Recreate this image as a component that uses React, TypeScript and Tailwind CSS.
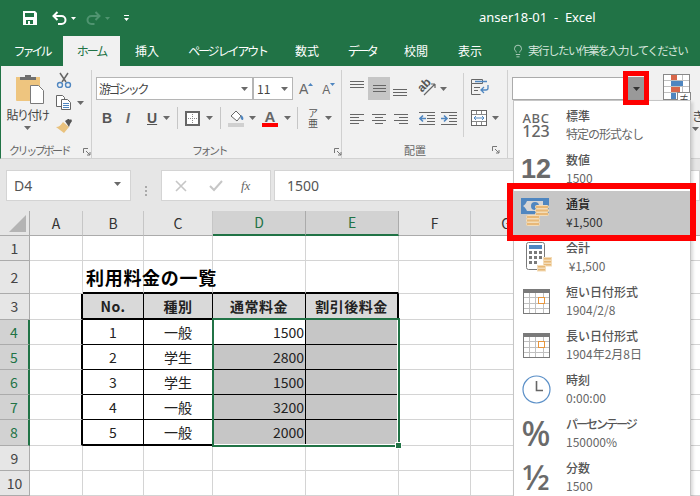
import React from "react";
import { Lightbulb } from "lucide-react";

const jp = "font-['Noto_Sans_CJK_JP','Noto_Sans',sans-serif]";

const Caret = ({ className = "" }: { className?: string }) => (
  <svg width="7" height="4" viewBox="0 0 7 4" className={`shrink-0 ${className}`}>
    <path d="M0 0h7L3.5 4z" fill="#6a6a6a" />
  </svg>
);

const Launcher = () => (
  <svg width="8" height="8" viewBox="0 0 8 8" className="shrink-0">
    <path d="M.5 5V.5H5M3 3l4 4M7 4v3H4" fill="none" stroke="#777" />
  </svg>
);

const Sep = ({ className = "" }: { className?: string }) => (
  <div className={`w-px h-[22px] bg-[#c6c6c6] shrink-0 ${className}`} />
);

// alignment icons share one drawing, only the line widths differ
const Lines = ({ rows, className = "" }: { rows: [number, number][]; className?: string }) => (
  <svg width="15" height="14" viewBox="0 0 15 14" className={`shrink-0 ${className}`}>
    {rows.map(([x, w], i) => (
      <rect key={i} x={x} y={1 + i * 3} width={w} height="1" fill="#666" />
    ))}
  </svg>
);

const Calendar = () => (
  <svg width="27" height="25" viewBox="0 0 27 25">
    <rect x="0.5" y="0.5" width="26" height="24" fill="#fff" stroke="#7a7a7a" />
    <rect x="0" y="0" width="27" height="4" fill="#7a7a7a" />
    <path d="M6.500 4v20M12.500 4v20M20.500 4v20M1 8.500h25M1 14.500h25M1 19.500h25" stroke="#c0c0c0" />
    <rect x="15.500" y="8.500" width="6" height="6" fill="#fff" stroke="#e8963c" />
  </svg>
);

const Currency = () => (
  <svg width="30" height="30" viewBox="0 0 30 30">
    <rect x="0" y="0" width="28" height="16" fill="#4f86c0" />
    <path d="M2 8c2-1 3-3 4-5h16v10H6C5 11 4 9 2 8z" fill="#d6d6d6" />
    <circle cx="14" cy="8" r="4" fill="#4f86c0" />
    <g fill="#e8b877" stroke="#f3dcb8" strokeWidth="1">
      <rect x="14.500" y="7.500" width="13" height="3" rx="1" />
      <rect x="14.500" y="11" width="13" height="3" rx="1" />
      <rect x="14.500" y="14.500" width="13" height="3" rx="1" />
      <rect x="5.500" y="17.500" width="13" height="3" rx="1" />
      <rect x="5.500" y="21" width="13" height="3" rx="1" />
      <rect x="5.500" y="24.500" width="13" height="3" rx="1" />
    </g>
  </svg>
);

const Calculator = () => (
  <svg width="27" height="31" viewBox="0 0 27 31" className="ml-[6px]">
    <rect x="0.5" y="0.5" width="18" height="27" rx="2" fill="#fff" stroke="#7a7a7a" />
    <rect x="3" y="3" width="13" height="4" fill="#4f86c0" />
    <path d="M3 9h3v3H3zM8 9h3v3H8zM13 9h3v3h-3zM3 14h3v3H3zM8 14h3v3H8zM13 14h3v3h-3zM3 19h3v3H3zM8 19h3v3H8z" fill="#7a7a7a" />
    <g fill="#e8b877" stroke="#f3dcb8">
      <rect x="17.500" y="15.500" width="8" height="2.500" />
      <rect x="17.500" y="18.500" width="8" height="2.500" />
      <rect x="17.500" y="21.500" width="8" height="2.500" />
      <rect x="11.500" y="23.500" width="8" height="2.500" />
      <rect x="11.500" y="26.500" width="8" height="2.500" />
    </g>
  </svg>
);

const Clock = () => (
  <svg width="29" height="29" viewBox="0 0 29 29">
    <circle cx="14.5" cy="14.5" r="13.5" fill="#fff" stroke="#5a8fc7" strokeWidth="1.2" />
    <path d="M14.5 6v9.500H21" fill="none" stroke="#666" strokeWidth="1.6" />
  </svg>
);

type Fmt = { label: string; sub: string; icon: React.ReactNode; selected?: boolean; labelCls?: string; subCls?: string };

const formats: Fmt[] = [
  {
    label: "標準",
    sub: "特定の形式なし",
    subCls: "tracking-[-1px]",
    icon: (
      <div className="flex flex-col items-center text-[#666] font-medium font-['Noto_Sans',sans-serif]">
        <span className="text-[13px] leading-[12px] tracking-[0.5px]">ABC</span>
        <span className="text-[16px] leading-[15px]">123</span>
      </div>
    ),
  },
  {
    label: "数値",
    sub: "1500",
    icon: <span className="text-[27px] leading-none font-bold text-[#6a6a6a] font-['Liberation_Sans',sans-serif]">12</span>,
  },
  { label: "通貨", sub: "¥1,500", icon: <Currency />, selected: true },
  { label: "会計", sub: " ¥1,500", icon: <Calculator /> },
  { label: "短い日付形式", sub: "1904/2/8", icon: <Calendar /> },
  { label: "長い日付形式", sub: "1904年2月8日", icon: <Calendar /> },
  { label: "時刻", sub: "0:00:00", icon: <Clock /> },
  {
    label: "パーセンテージ",
    labelCls: "tracking-[-2px]",
    sub: "150000%",
    icon: <span className="text-[34px] leading-none font-medium text-[#6a6a6a] font-['Noto_Sans',sans-serif]">%</span>,
  },
  {
    label: "分数",
    sub: "1500",
    icon: <span className="text-[34px] leading-none font-medium text-[#6a6a6a] font-['Noto_Sans',sans-serif]">½</span>,
  },
];

const tabs = [
  { name: "ファイル", w: "w-[63px]", cls: "tracking-[-3px]" },
  { name: "ホーム", w: "w-[57px]", active: true, cls: "tracking-[-2px]" },
  { name: "挿入", w: "w-[54px]", cls: "" },
  { name: "ページ レイアウト", w: "w-[107px]", cls: "tracking-[-2.2px]" },
  { name: "数式", w: "w-[52px]", cls: "" },
  { name: "データ", w: "w-[58px]", cls: "tracking-[-2.500px]" },
  { name: "校閲", w: "w-[50px]", cls: "" },
  { name: "表示", w: "w-[58px]", cls: "" },
];

const TitleBar = () => (
  <div className="h-[36px] bg-[#217346] flex items-center pl-[23px]">
    <svg width="14" height="14" viewBox="0 0 14 14">
      <path
        fillRule="evenodd"
        d="M0 0h12l2 2v12H0zM2 2v4h9V2zM3 9v4h7V9zM5 10h2v3H5z"
        fill="#fff"
      />
    </svg>
    <svg width="15" height="14" viewBox="0 0 15 14" className="ml-[15px]">
      <path d="M5.500 1L1.500 5l4 4M1.500 5h8a4 4 0 0 1 0 8H6" fill="none" stroke="#fff" strokeWidth="2" />
    </svg>
    <svg width="5" height="3" viewBox="0 0 5 3" className="ml-[4px]"><path d="M0 0h5L2.5 3z" fill="#fff" /></svg>
    <svg width="15" height="14" viewBox="0 0 15 14" className="ml-[10px]">
      <path d="M9.500 1l4 4-4 4M13.500 5h-8a4 4 0 0 0 0 8h3" fill="none" stroke="#4f9470" strokeWidth="2" />
    </svg>
    <svg width="5" height="3" viewBox="0 0 5 3" className="ml-[4px]"><path d="M0 0h5L2.5 3z" fill="#4f9470" /></svg>
    <svg width="5" height="6" viewBox="0 0 5 6" className="ml-[14px]">
      <path d="M0 0h5v1H0zM0 3h5L2.5 6z" fill="#fff" />
    </svg>
    <span className="ml-[350px] text-[13px] text-white whitespace-pre font-['Noto_Sans',sans-serif]">anser18-01  -  Excel</span>
  </div>
);

const TabBar = () => (
  <div className={`h-[30px] bg-[#217346] flex items-stretch text-[12px] text-white ${jp}`}>
    {tabs.map((t) => (
      <div
        key={t.name}
        className={`${t.w} ${t.cls} shrink-0 flex items-center justify-center whitespace-nowrap ${t.active ? "bg-[#f1f1f1] text-[#217346]" : ""}`}
      >
        {t.name}
      </div>
    ))}
    <div className="flex items-center ml-[12px] text-[#d5e5dc]">
      <Lightbulb size={14} strokeWidth={1.3} className="shrink-0" />
      <span className="ml-[3px] text-[11.5px] tracking-[-1.5px] whitespace-nowrap">実行したい作業を入力してください</span>
    </div>
  </div>
);

const Clipboard = () => (
  <div className="w-[91px] h-[88px] border-r border-[#d0d0d0] relative flex flex-col shrink-0">
    <div className="flex h-[72px]">
      <div className="w-[53px] flex flex-col items-center pt-[4px]">
        <svg width="28" height="30" viewBox="0 0 28 30" className="ml-[4px]">
          <path d="M0 3h24v24H1a1 1 0 0 1-1-1z" fill="#eec57f" />
          <path d="M4 6V3h5V1h6v2h5v3z" fill="#6f6f6f" />
          <path d="M14.500 11.500h8l5 5v13h-13z" fill="#fff" stroke="#7a7a7a" />
        </svg>
        <span className="text-[12px] leading-[14px] mt-[4px] tracking-[-1.5px] whitespace-nowrap text-[#444]">貼り付け</span>
        <Caret className="mt-[4px]" />
      </div>
      <div className="flex flex-col pl-[2px] pt-[2px]">
        <svg width="16" height="16" viewBox="0 0 16 16">
          <path d="M4 1l6 9M12 1l-6 9" stroke="#666" strokeWidth="1.5" />
          <circle cx="4" cy="13" r="2.500" fill="none" stroke="#4f86c0" strokeWidth="1.4" />
          <circle cx="12" cy="13" r="2.500" fill="none" stroke="#4f86c0" strokeWidth="1.4" />
        </svg>
        <div className="flex items-center mt-[7px]">
          <svg width="16" height="15" viewBox="0 0 16 15">
            <path d="M.5.5h6l2 2v9h-8z" fill="#fff" stroke="#666" />
            <path d="M5.500 4.500h6l3 3v7h-9z" fill="#fff" stroke="#666" />
            <path d="M7 8.500h6M7 10.500h6M7 12.500h6" stroke="#4f86c0" />
          </svg>
          <Caret className="ml-[5px]" />
        </div>
        <svg width="17" height="15" viewBox="0 0 17 15" className="mt-[8px]">
          <path d="M7 4l6 5-5 6L0 9c3 0 5-2 7-5z" fill="#e9c27e" />
          <path d="M9 3l3-2 1 0 1 1 1-1 1 2-2 3-1 3z" fill="#555" />
        </svg>
      </div>
    </div>
    <div className="mt-auto h-[16px] flex items-center pl-[8px] text-[11px] text-[#666] whitespace-nowrap">
      <span className="tracking-[-2.4px]">クリップボード</span>
      <span className="ml-[14px] mt-[3px] flex"><Launcher /></span>
    </div>
  </div>
);

const FontGroup = () => (
  <div className="w-[250px] h-[88px] border-r border-[#d0d0d0] flex flex-col pl-[4px] pt-[7px] shrink-0">
    <div className="flex h-[23px] items-center">
      <div className="w-[157px] h-[23px] bg-white border border-[#b5b5b5] flex items-center pl-[2px] pr-[4px] text-[12px] text-[#444]">
        <span className="tracking-[-2.400px]">游ゴシック</span>
        <Caret className="ml-auto" />
      </div>
      <div className="w-[40px] h-[23px] bg-white border border-[#b5b5b5] flex items-center pl-[3px] pr-[4px] text-[12px] text-[#444]">
        11
        <Caret className="ml-auto" />
      </div>
      <div className="ml-[6px] flex items-start text-[14px] leading-none font-['Liberation_Sans',sans-serif] text-[#666]">
        A<svg width="5" height="3" viewBox="0 0 5 3" className="mt-[1px]"><path d="M0 3h5L2.5 0z" fill="#4f86c0" /></svg>
      </div>
      <div className="ml-[9px] flex items-start text-[12px] leading-none font-['Liberation_Sans',sans-serif] text-[#666] mt-[2px]">
        A<svg width="5" height="3" viewBox="0 0 5 3" className="mt-[-1px]"><path d="M0 0h5L2.5 3z" fill="#4f86c0" /></svg>
      </div>
    </div>
    <div className="flex h-[22px] items-center mt-[7px] font-['Liberation_Sans',sans-serif] text-[#555]">
      <span className="ml-[6px] w-[10px] text-[14px] font-bold">B</span>
      <span className="ml-[14px] w-[8px] text-[14px] italic font-bold text-[#666]">I</span>
      <span className="ml-[13px] w-[10px] text-[14px] font-bold underline">U</span>
      <Caret className="ml-[6px]" />
      <Sep className="ml-[7px]" />
      <svg width="15" height="15" viewBox="0 0 15 15" className="ml-[7px]">
        <rect x="1" y="1" width="13" height="13" fill="#fff" stroke="#666" strokeWidth="2" />
        <path d="M7.500 3v9M3 7.500h9" stroke="#888" strokeDasharray="1 1" />
      </svg>
      <Caret className="ml-[6px]" />
      <Sep className="ml-[7px]" />
      <svg width="16" height="17" viewBox="0 0 16 17" className="ml-[7px]">
        <path d="M3 6l5-5 5 5-4 5z" fill="#fff" stroke="#666" />
        <path d="M13 5c2 1 3 3 2 5-2 0-3-2-2-5z" fill="#4f86c0" />
        <rect x="0" y="13" width="16" height="4" fill="#d0d0d0" />
      </svg>
      <Caret className="ml-[5px]" />
      <div className="ml-[6px] w-[16px] flex flex-col items-center">
        <span className="text-[15px] leading-[13px] font-bold text-[#666]">A</span>
        <div className="w-[16px] h-[4px] bg-[#f00]" />
      </div>
      <Caret className="ml-[6px]" />
      <Sep className="ml-[6px]" />
      <span className={`ml-[9px] w-[12px] text-[10px] leading-[10px] text-center text-[#555] ${jp}`}>ア亜</span>
      <Caret className="ml-[6px]" />
    </div>
    <div className="mt-auto h-[16px] flex items-center text-[11px] text-[#666] whitespace-nowrap">
      <span className="ml-[96px] tracking-[-2.500px]">フォント</span>
      <span className="ml-[108px] mt-[3px] flex"><Launcher /></span>
    </div>
  </div>
);

const AlignGroup = () => (
  <div className="w-[166px] h-[88px] border-r border-[#d0d0d0] flex shrink-0 relative">
    <div className="w-[121px] flex flex-col pl-[8px] pt-[7px]">
      <div className="flex h-[23px]">
        <Lines className="self-start mt-[3px]" rows={[[0, 14], [0, 14], [0, 14]]} />
        <div className="ml-[3px] w-[22px] h-[23px] bg-[#c6c6c6] flex items-center justify-center">
          <svg width="15" height="8" viewBox="0 0 15 8">
            <path d="M1 .5h13M1 3.500h13M1 6.500h13" stroke="#666" />
          </svg>
        </div>
        <Lines className="self-start mt-[11px] ml-[3px]" rows={[[0, 14], [0, 14], [0, 14]]} />
        <div className="ml-[9px] mt-[2px] w-[20px] h-[18px] relative shrink-0">
          <span className="block w-[14px] -rotate-45 text-[12px] leading-[12px] text-[#555] font-bold font-['Liberation_Sans',sans-serif]">ab</span>
          <svg width="20" height="18" viewBox="0 0 20 18" className="absolute left-0 top-0">
            <path d="M7 16L18 5m0 0h-4m4 0v4" fill="none" stroke="#666" strokeWidth="1.2" />
          </svg>
        </div>
        <Caret className="ml-[3px] mt-[10px]" />
      </div>
      <div className="flex h-[22px] items-center mt-[7px]">
        <Lines className="mt-[4px]" rows={[[0, 14], [0, 9], [0, 14], [0, 9]]} />
        <Lines className="mt-[4px] ml-[7px]" rows={[[0, 14], [3, 8], [0, 14], [3, 8]]} />
        <Lines className="mt-[4px] ml-[7px]" rows={[[0, 14], [5, 9], [0, 14], [5, 9]]} />
        <svg width="17" height="14" viewBox="0 0 17 14" className="ml-[10px] shrink-0">
          <path d="M0 1.500h16M8 4.500h8M8 7.500h8M8 10.500h8M0 13.500h16" stroke="#666" />
          <path d="M7 7.500H1m3-3l-3 3 3 3" fill="none" stroke="#4f86c0" strokeWidth="1.6" />
        </svg>
        <svg width="17" height="14" viewBox="0 0 17 14" className="ml-[5px] shrink-0">
          <path d="M0 1.500h16M8 4.500h8M8 7.500h8M8 10.500h8M0 13.500h16" stroke="#666" />
          <path d="M0 7.500h6m-3-3l3 3-3 3" fill="none" stroke="#4f86c0" strokeWidth="1.6" />
        </svg>
      </div>
      <div className="mt-auto h-[16px] flex items-center text-[11px] text-[#666]">
        <span className="ml-[54px]">配置</span>
      </div>
    </div>
    <div className="w-px h-[64px] bg-[#d0d0d0] mt-[3px]" />
    <div className="flex-1 flex flex-col pl-[7px] pt-[9px]">
      <svg width="18" height="16" viewBox="0 0 18 16">
        <path d="M.5.500h11v4H.5zM.5 4.500v11h9M3 8.500h6M3 11.500h4" stroke="#666" fill="none" />
        <path d="M4 2.500h12M17 6v3a2 2 0 0 1-2 2h-5m3-3l-3 3 3 3" stroke="#4f86c0" fill="none" strokeWidth="1.3" />
      </svg>
      <div className="flex items-center mt-[15px]">
        <svg width="16" height="16" viewBox="0 0 16 16">
          <rect x="0.5" y="0.5" width="15" height="15" fill="#fff" stroke="#666" />
          <path d="M1 4.500h14M1 11.500h14M5.500 1v3M10.500 1v3M5.500 12v3M10.500 12v3" stroke="#888" />
          <path d="M3 8h10M5 6L3 8l2 2M11 6l2 2-2 2" fill="none" stroke="#4f86c0" />
        </svg>
        <Caret className="ml-[5px]" />
      </div>
      <div className="mt-auto h-[16px] flex items-center pl-[21px]">
        <Launcher />
      </div>
    </div>
  </div>
);

const NumberGroup = () => (
  <div className="flex-1 h-[88px] flex pl-[4px] pt-[7px] relative overflow-hidden">
    <div className="w-[116px] h-[23px] bg-white border border-[#ababab] shrink-0" />
    <div className="w-[16px] h-[23px] bg-[#999] flex items-center justify-center shrink-0">
      <svg width="7" height="4" viewBox="0 0 7 4"><path d="M0 0h7L3.500 4z" fill="#333" /></svg>
    </div>
    <div className="ml-[19px] mt-[-3px] shrink-0 relative">
      <svg width="27" height="26" viewBox="0 0 27 26">
        <rect x="0.5" y="0.5" width="26" height="25" fill="#fff" stroke="#888" />
        <path d="M8.500 1v24M19.500 1v24M1 6.500h25M1 12.500h25M1 18.500h25" stroke="#c0c0c0" />
        <rect x="8" y="1" width="6" height="5" fill="#d9674a" />
        <rect x="8" y="7" width="12" height="5" fill="#4f86c0" />
        <rect x="8" y="13" width="9" height="5" fill="#d9674a" />
        <rect x="8" y="19" width="5" height="6" fill="#4f86c0" />
      </svg>
      <div className="absolute left-[14px] top-[18px] w-[14px] h-[12px] bg-white border border-[#888] flex items-center justify-center text-[10px] leading-none text-[#444]">≠</div>
    </div>
    <div className="flex flex-col pl-[2px] pt-[32px] text-[12px] leading-[14px] text-[#444]">
      <span className="whitespace-nowrap">き</span>
      <Caret className="mt-[4px]" />
    </div>
  </div>
);

const FormulaBar = () => (
  <div className="h-[52px] bg-[#e6e6e6] flex pl-[6px] pt-[11px]">
    <div className="w-[125px] h-[31px] bg-white border border-[#d4d4d4] flex items-center px-[7px] text-[14px] text-[#555] font-['Noto_Sans',sans-serif]">
      D4
      <Caret className="ml-auto mr-[2px] mb-[3px]" />
    </div>
    <div className="w-[30px] flex flex-col items-center justify-center gap-[2px]">
      <div className="w-[2px] h-[2px] bg-[#aaa]" />
      <div className="w-[2px] h-[2px] bg-[#aaa]" />
      <div className="w-[2px] h-[2px] bg-[#aaa]" />
    </div>
    <div className="w-[110px] h-[31px] bg-white border border-[#d4d4d4] flex items-center pl-[13px]">
      <svg width="12" height="12" viewBox="0 0 12 12"><path d="M1 1l10 10M11 1L1 11" stroke="#c6c6c6" strokeWidth="1.6" /></svg>
      <svg width="14" height="12" viewBox="0 0 14 12" className="ml-[22px]"><path d="M1 6l4 4 8-9" fill="none" stroke="#c6c6c6" strokeWidth="2" /></svg>
      <span className="ml-[18px] text-[13px] italic font-['Liberation_Serif',serif] text-[#666]">fx</span>
    </div>
    <div className="flex-1 ml-[3px] h-[31px] bg-white border border-[#d4d4d4] flex items-center pl-[12px] text-[14px] text-[#555] font-['Noto_Sans',sans-serif]">
      1500
    </div>
  </div>
);

const colNames = ["A", "B", "C", "D", "E", "F", "G"];
const rowHeights = ["h-[25px]", "h-[33px]", "h-[26px]", "h-[25px]", "h-[25px]", "h-[25px]", "h-[25px]", "h-[26px]", "h-[25px]", "h-[25px]"];

const tableData: Record<number, string[]> = {
  3: ["No.", "種別", "通常料金", "割引後料金"],
  4: ["1", "一般", "1500", ""],
  5: ["2", "学生", "2800", ""],
  6: ["3", "学生", "1500", ""],
  7: ["4", "一般", "3200", ""],
  8: ["5", "一般", "2000", ""],
};

// col index: 0=A ... 6=G, row is the sheet row number
const cellClass = (row: number, col: number) => {
  const inTable = row >= 3 && row <= 8 && col >= 1 && col <= 4;
  let right = "border-r border-r-[#d4d4d4]";
  let bottom = "border-b border-b-[#d4d4d4]";
  if (row >= 3 && row <= 8 && col === 0) right = "border-r-2 border-r-black";
  if (inTable) {
    right = col === 4 ? "border-r-2 border-r-black" : "border-r border-r-black";
    bottom = row === 3 || row === 8 ? "border-b-2 border-b-black" : "border-b border-b-black";
  }
  if (row === 2 && col >= 1 && col <= 4) bottom = "border-b-2 border-b-black";
  let bg = "bg-white";
  if (row === 3 && inTable) bg = "bg-[#d9d9d9]";
  if (row >= 4 && row <= 8 && (col === 4 || (col === 3 && row > 4))) bg = "bg-[#c6c6c6]";
  return `${right} ${bottom} ${bg}`;
};

const cellAlign = (row: number, col: number) => {
  if (row === 2 && col === 1) return "justify-start";
  if (col === 3 && row > 3) return "justify-end pr-[1px]";
  return "justify-center";
};

const Sheet = () => (
  <div className={`relative grid grid-cols-[30px_53px_61px_69px_93px_93px_72px_71px_1fr] text-[14px] text-[#222] ${jp}`}>
    <div className="h-[25px] bg-[#e6e6e6] border-r border-b border-[#ababab] flex items-end justify-end pr-[3px] pb-[3px]">
      <svg width="17" height="17" viewBox="0 0 17 17"><path d="M17 0v17H0z" fill="#b4b4b4" /></svg>
    </div>
    {colNames.map((c) => {
      const sel = c === "D" || c === "E";
      return (
        <div
          key={c}
          className={`h-[25px] flex items-center justify-center border-r text-[14px] ${
            sel ? "bg-[#d2d2d2] border-r-[#ababab] border-b-2 border-b-[#217346] text-[#217346]" : "bg-[#e6e6e6] border-r-[#c6c6c6] border-b border-b-[#ababab] text-[#333]"
          }`}
        >
          {c}
        </div>
      );
    })}
    <div className="h-[25px] bg-[#e6e6e6] border-b border-b-[#ababab]" />
    {rowHeights.map((h, i) => {
      const row = i + 1;
      const sel = row >= 4 && row <= 8;
      return (
        <React.Fragment key={row}>
          <div
            className={`${h} flex items-center justify-center ${
              sel ? "bg-[#d2d2d2] text-[#217346] border-r-2 border-r-[#217346] border-b border-b-[#ababab]" : "bg-[#e6e6e6] text-[#444] border-r border-r-[#ababab] border-b border-b-[#ababab]"
            }`}
          >
            {row}
          </div>
          {colNames.map((_, col) => {
            const text = col >= 1 && col <= 4 ? tableData[row]?.[col - 1] : "";
            return (
              <div
                key={col}
                className={`${h} ${cellClass(row, col)} ${cellAlign(row, col)} flex items-center whitespace-nowrap min-w-0 ${row === 3 ? "font-bold tracking-[0.5px]" : ""}`}
              >
                {row === 2 && col === 1 ? (
                  <span className="relative z-10 self-end mb-[3px] ml-[3px] text-[18px] leading-[24px] font-bold tracking-[0.7px] text-black">利用料金の一覧</span>
                ) : (
                  text
                )}
              </div>
            );
          })}
          <div className={`${h} bg-white border-b border-b-[#d4d4d4]`} />
        </React.Fragment>
      );
    })}
    {/* selection frame and fill handle */}
    <div className="absolute left-[212px] top-[107px] w-[188px] h-[129px] border-2 border-[#217346] shadow-[inset_-1px_-1px_0_#fff] pointer-events-none" />
    <div className="absolute left-[395px] top-[231px] w-[7px] h-[7px] bg-[#217346] border border-white" />
  </div>
);

const FormatMenu = () => (
  <div className={`absolute left-[513px] top-[100px] w-[178px] h-[396px] overflow-hidden bg-white border-x border-t border-[#c6c6c6] shadow-[2px_2px_3px_rgba(0,0,0,0.15)] pt-[2px] ${jp}`}>
    {formats.map((f) => (
      <div key={f.label} className={`h-[44px] flex items-center ${f.selected ? "bg-[#c6c6c6]" : ""}`}>
        <div className="w-[44px] flex justify-center shrink-0">{f.icon}</div>
        <div className="ml-[8px] flex flex-col">
          <span className={`text-[12px] leading-[18px] font-medium ${f.labelCls ?? ""} ${f.selected ? "text-[#222]" : "text-[#555]"}`}>{f.label}</span>
          <span className={`text-[12px] leading-[18px] whitespace-pre ${f.subCls ?? ""} ${f.selected ? "text-[#333]" : "text-[#666]"}`}>{f.sub}</span>
        </div>
      </div>
    ))}
  </div>
);

export default function App() {
  return (
    <div className={`relative w-[700px] h-[496px] overflow-hidden bg-white ${jp}`}>
      <TitleBar />
      <TabBar />
      <div className="h-[93px] bg-[#f1f1f1] border-l border-l-[#217346] border-b border-b-[#d2d2d2] flex pt-[4px] text-[#444]">
        <Clipboard />
        <FontGroup />
        <AlignGroup />
        <NumberGroup />
      </div>
      <FormulaBar />
      <Sheet />
      <FormatMenu />
      {/* red callouts drawn over the screenshot */}
      <div className="absolute left-[623px] top-[71px] w-[26px] h-[34px] border-[5px] border-[#f00]" />
      <div className="absolute left-[507px] top-[183px] w-[189px] h-[58px] border-[6px] border-[#f00]" />
    </div>
  );
}
